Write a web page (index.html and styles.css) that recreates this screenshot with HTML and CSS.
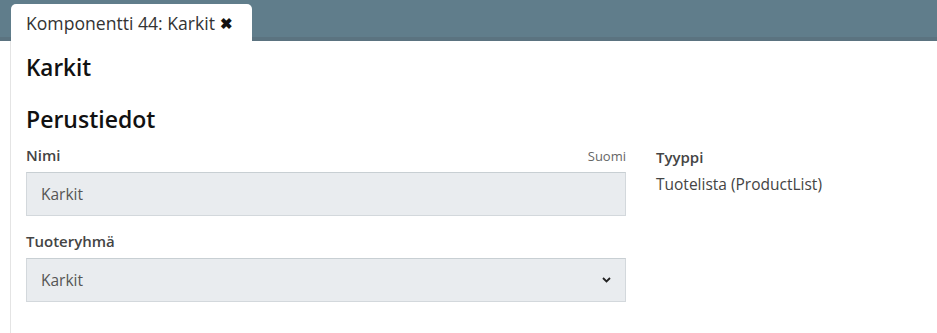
FILE: index.html
```html
<!DOCTYPE html>
<html><head>
<title>Komponentti 44: Karkit</title>
<link rel="stylesheet" href="styles.css">
</head><body>

<div class="topbar">
  <div class="tab">Komponentti 44: Karkit <span class="close">&#x2716;</span></div>
</div>

<div class="panel">
  <h1>Karkit</h1>
  <h2>Perustiedot</h2>

  <div class="columns">
    <div class="main">
      <div class="field">
        <div class="label-row"><label>Nimi</label><span class="lang">Suomi</span></div>
        <div class="input">Karkit</div>
      </div>
      <div class="field">
        <div class="label-row"><label>Tuoteryhmä</label></div>
        <div class="input select">Karkit
          <svg class="caret" width="9" height="6" viewBox="0 0 9 6"><path d="M1 1 L4.5 4.5 L8 1" fill="none" stroke="#222" stroke-width="1.8"/></svg>
        </div>
      </div>
    </div>
    <div class="side">
      <label>Tyyppi</label>
      <div class="value">Tuotelista (ProductList)</div>
    </div>
  </div>
</div>

</body></html>
```

FILE: styles.css
```css
html, body {
  margin: 0;
  padding: 0;
  background: #fff;
  font-family: "Open Sans", sans-serif;
  color: #333;
  }
.topbar {
  height: 41px;
  background: #607d8b;
  box-shadow: inset 0 -4px 0 #5b7380;
  display: flex;
  align-items: flex-end;
  padding-left: 11px;
  }
.tab {
  height: 37px;
  background: #fff;
  border-radius: 5px 5px 0 0;
  padding: 0 15px;
  box-sizing: border-box;
  width: 241px;
  display: flex;
  align-items: center;
  gap: 5px;
  font-size: 17.6px;
  color: #333;
  }
.close {
  font-size: 15px;
  color: #111;
  font-weight: bold;
  }
.panel {
  margin-left: 10px;
  border-left: 1px solid #e4e4e4;
  padding: 12px 15px 0;
  height: 292px;
  box-sizing: border-box;
  }
h1 {
  margin: 0;
  font-size: 22.5px;
  font-weight: 600;
  color: #111;
  line-height: 30px;
  }
h2 {
  margin: 20px 0 0;
  font-size: 23px;
  font-weight: 600;
  color: #111;
  line-height: 32px;
  }
.columns {
  display: grid;
  grid-template-columns: 600px 1fr;
  gap: 30px;
  margin-top: 10px;
  }
.label-row {
  display: flex;
  justify-content: space-between;
  align-items: baseline;
  height: 27px;
  }
label {
  font-size: 15px;
  font-weight: 600;
  color: #444;
  }
.lang {
  font-size: 13px;
  color: #666;
  }
.field {
  margin-bottom: 15px;
  }
.input {
  height: 44px;
  box-sizing: border-box;
  background: #e9ecef;
  border: 1px solid #d3d8dc;
  border-top-color: #c8cfd3;
  padding: 0 14px;
  display: flex;
  align-items: center;
  font-size: 15.5px;
  color: #555;
  }
.select {
  justify-content: space-between;
  }
.side label {
  display: block;
  line-height: 24px;
  }
.value {
  font-size: 15.5px;
  color: #444;
  line-height: 24px;
  margin-top: 3px;
  }
```
